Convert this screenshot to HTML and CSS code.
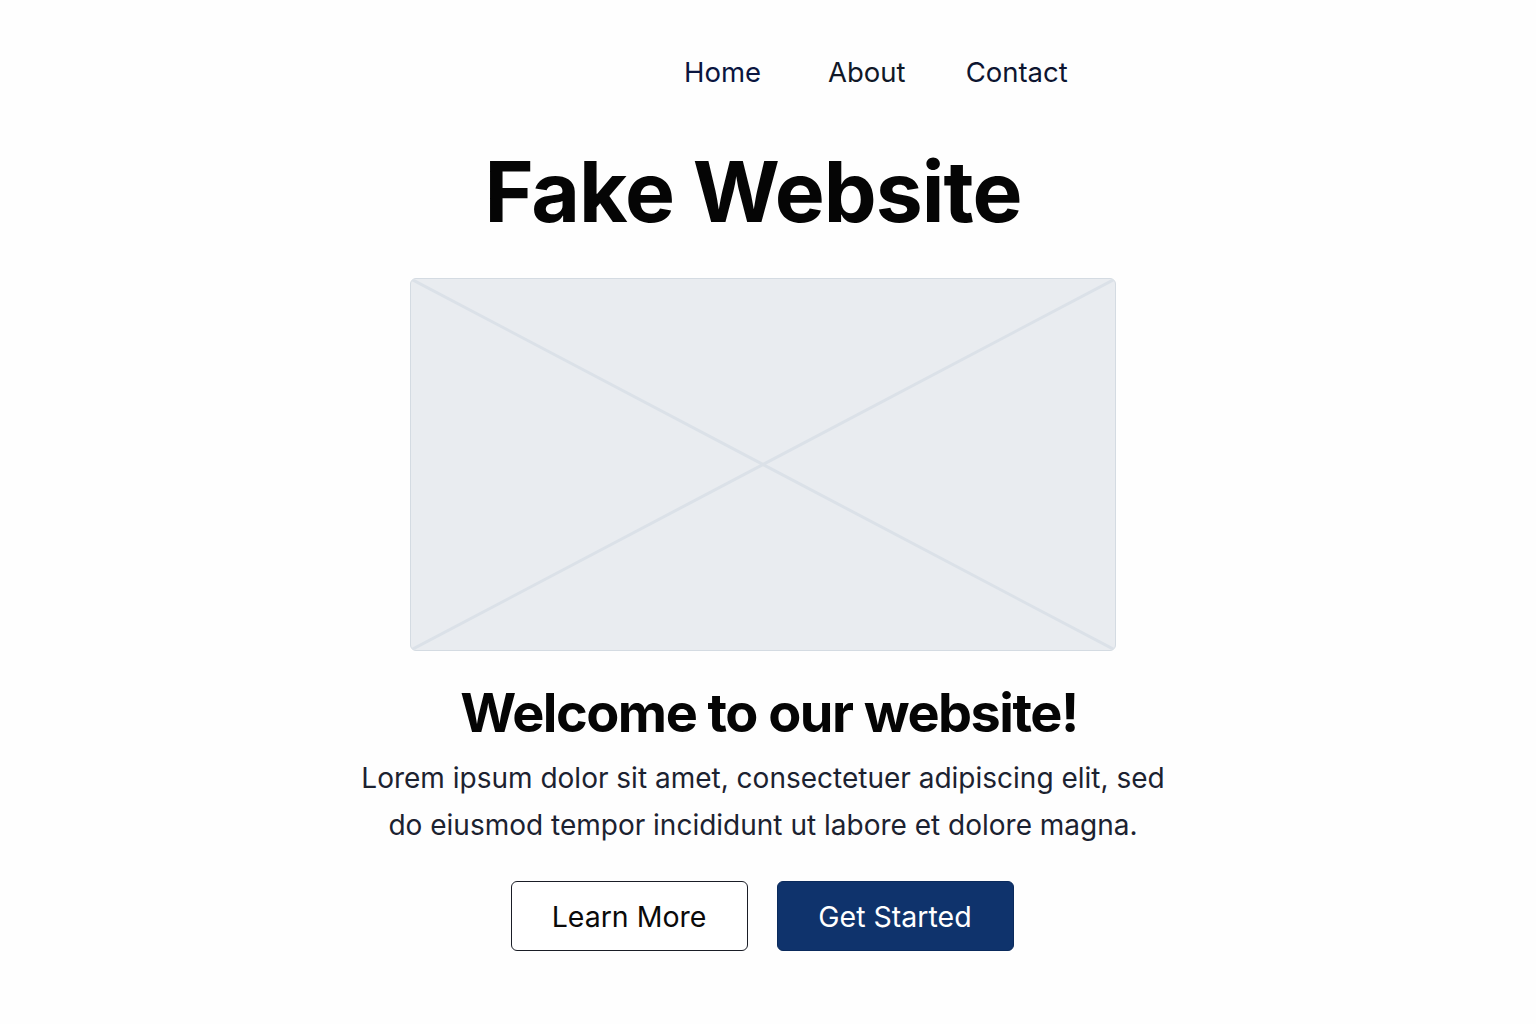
FILE: index.html
```html
<!DOCTYPE html>
<html lang="en">
<head>
<meta charset="utf-8">
<title>Fake Website</title>
<link rel="stylesheet" href="styles.css">
</head>
<body>
<header class="header">
  <nav class="nav">
    <a class="nav-link nav-home" href="#">Home</a>
    <a class="nav-link nav-about" href="#">About</a>
    <a class="nav-link" href="#">Contact</a>
  </nav>
</header>
<main class="main">
  <h1 class="title">Fake Website</h1>
  <div class="placeholder">
    <svg class="placeholder-svg" viewBox="0 0 100 100" preserveAspectRatio="none">
      <line x1="0" y1="0" x2="100" y2="100" vector-effect="non-scaling-stroke"/>
      <line x1="100" y1="0" x2="0" y2="100" vector-effect="non-scaling-stroke"/>
    </svg>
  </div>
  <h2 class="welcome">Welcome to our website!</h2>
  <p class="lead">Lorem ipsum dolor sit amet, consectetuer adipiscing elit, sed<br>do eiusmod tempor incididunt ut labore et dolore magna.</p>
  <div class="actions">
    <a class="btn btn-outline" href="#">Learn More</a>
    <a class="btn btn-primary" href="#">Get Started</a>
  </div>
</main>
</body>
</html>
```
FILE: styles.css
```css
* { box-sizing: border-box; }
html, body { margin: 0; padding: 0; background: #fefefe; }
body {
  font-family: Inter, "Noto Sans", "Liberation Sans", sans-serif;
  color: #111;
  width: 1536px;
  height: 1024px;
  overflow: hidden;
}
.header {
  padding-top: 56px;
  padding-left: 684px;
}
.nav {
  display: flex;
  align-items: center;
}
.nav-link {
  font-size: 27.5px;
  line-height: 32px;
  color: #0d1530;
  text-decoration: none;
}
.nav-home { margin-right: 67px; color: #0a1540; }
.nav-about { margin-right: 60px; color: #111827; }
.main {
  display: flex;
  flex-direction: column;
  align-items: center;
  padding-right: 10px;
}
.title {
  margin: 54px 0 0;
  font-size: 84px;
  line-height: 100px;
  font-weight: 700;
  letter-spacing: -1px;
  color: #050505;
  margin-right: 20px;
}
.placeholder {
  margin-top: 36px;
  width: 706px;
  height: 373px;
  background: #e9ecf0;
  border: 1.5px solid #d4dbe2;
  border-radius: 6px;
  overflow: hidden;
}
.placeholder-svg {
  display: block;
  width: 100%;
  height: 100%;
}
.placeholder-svg line {
  stroke: #dbe1e8;
  stroke-width: 3;
}
.welcome {
  margin: 30px 0 0;
  font-size: 54px;
  line-height: 64px;
  font-weight: 700;
  letter-spacing: -1.5px;
  color: #050505;
  padding-left: 12px;
}
.lead {
  margin: 10px 0 0;
  font-size: 28px;
  line-height: 47px;
  text-align: center;
  color: #1c2230;
}
.actions {
  margin-top: 32px;
  display: flex;
  gap: 29px;
  padding-right: 2px;
}
.btn {
  display: flex;
  align-items: center;
  justify-content: center;
  width: 237px;
  height: 70px;
  border-radius: 6px;
  font-size: 28.5px;
  text-decoration: none;
}
.btn-outline {
  border: 1.5px solid #1a1d26;
  color: #0a0a0a;
  background: #fff;
}
.btn-primary {
  border: 1px solid #0a2a5c;
  background: #0f336c;
  color: #fff;
}
```
